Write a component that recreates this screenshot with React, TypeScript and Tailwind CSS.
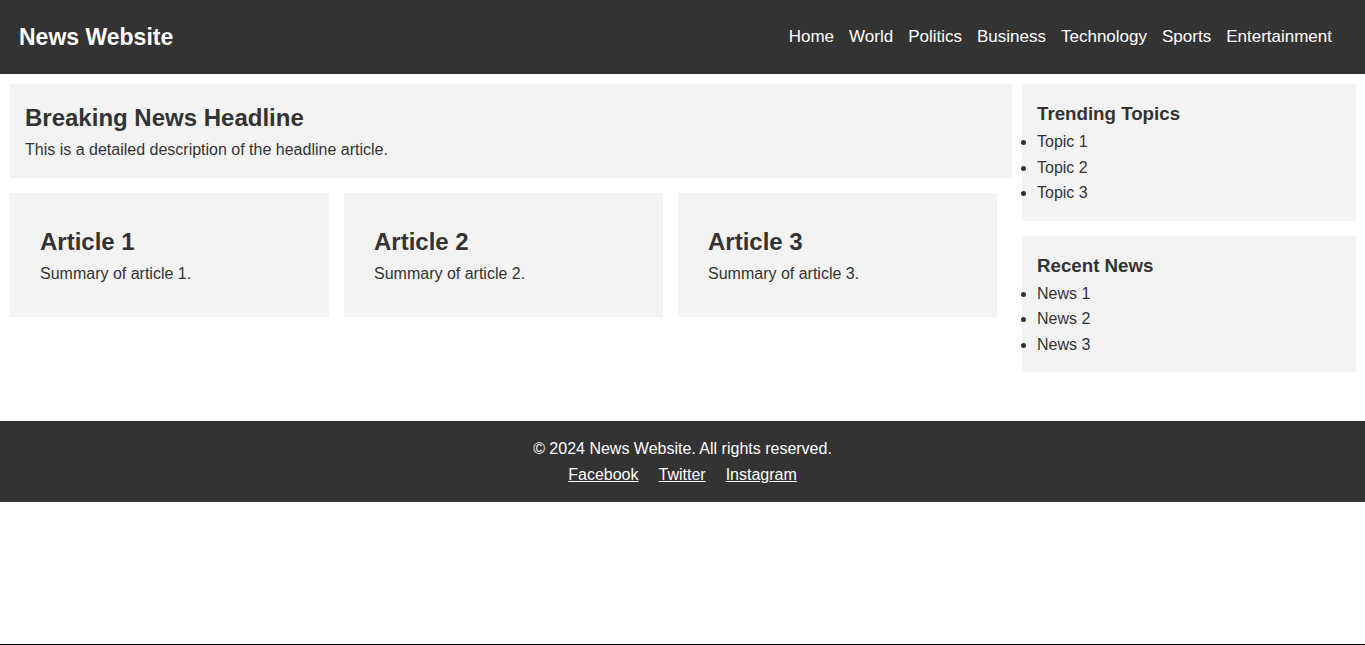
const navLinks = ['Home', 'World', 'Politics', 'Business', 'Technology', 'Sports', 'Entertainment']

const articles = [
  { title: 'Article 1', summary: 'Summary of article 1.' },
  { title: 'Article 2', summary: 'Summary of article 2.' },
  { title: 'Article 3', summary: 'Summary of article 3.' },
]

const sidebar = [
  { title: 'Trending Topics', items: ['Topic 1', 'Topic 2', 'Topic 3'] },
  { title: 'Recent News', items: ['News 1', 'News 2', 'News 3'] },
]

function Header() {
  return (
    <header className="flex h-[74px] items-center justify-between bg-[#333] pl-[19px] pr-[33px] text-white">
      <h1 className="text-[23px] font-bold">News Website</h1>
      <nav>
        <ul className="flex gap-[15px] text-[17px]">
          {navLinks.map((link) => (
            <li key={link}>
              <a href="#" className="text-white">
                {link}
              </a>
            </li>
          ))}
        </ul>
      </nav>
    </header>
  )
}

function SideBox({ title, items }: { title: string; items: string[] }) {
  return (
    <section className="bg-[#f3f3f3] p-[15px]">
      <h3 className="text-[18.72px] font-bold">{title}</h3>
      <ul className="list-disc pl-0">
        {items.map((item) => (
          <li key={item}>{item}</li>
        ))}
      </ul>
    </section>
  )
}

export default function App() {
  return (
    <div
      className="flex min-h-[645px] flex-col border-b border-black bg-white text-[16px] leading-[1.6] text-[#333]"
      style={{ fontFamily: '"Liberation Sans", Arial, sans-serif' }}
    >
      <Header />

      <main className="flex gap-[10px] pb-[49px] pl-[10px] pr-[9px] pt-[10px]">
        <div className="flex flex-1 flex-col gap-[15px]">
          {/* Headline */}
          <section className="bg-[#f3f3f3] p-[15px]">
            <h2 className="text-[24px] font-bold">Breaking News Headline</h2>
            <p>This is a detailed description of the headline article.</p>
          </section>

          {/* Articles */}
          <div className="flex gap-[15px]">
            {articles.map((a) => (
              <article key={a.title} className="w-[319px] bg-[#f3f3f3] p-[30px]">
                <h2 className="text-[24px] font-bold">{a.title}</h2>
                <p>{a.summary}</p>
              </article>
            ))}
          </div>
        </div>

        <aside className="flex w-[334px] flex-col gap-[15px]">
          {sidebar.map((s) => (
            <SideBox key={s.title} title={s.title} items={s.items} />
          ))}
        </aside>
      </main>

      <footer className="bg-[#333] pb-[14px] pt-[15px] text-center text-white">
        <p>© 2024 News Website. All rights reserved.</p>
        <div className="flex justify-center gap-[20px]">
          <a href="#" className="text-white underline">
            Facebook
          </a>
          <a href="#" className="text-white underline">
            Twitter
          </a>
          <a href="#" className="text-white underline">
            Instagram
          </a>
        </div>
      </footer>

      <div className="flex-1" />
    </div>
  )
}
